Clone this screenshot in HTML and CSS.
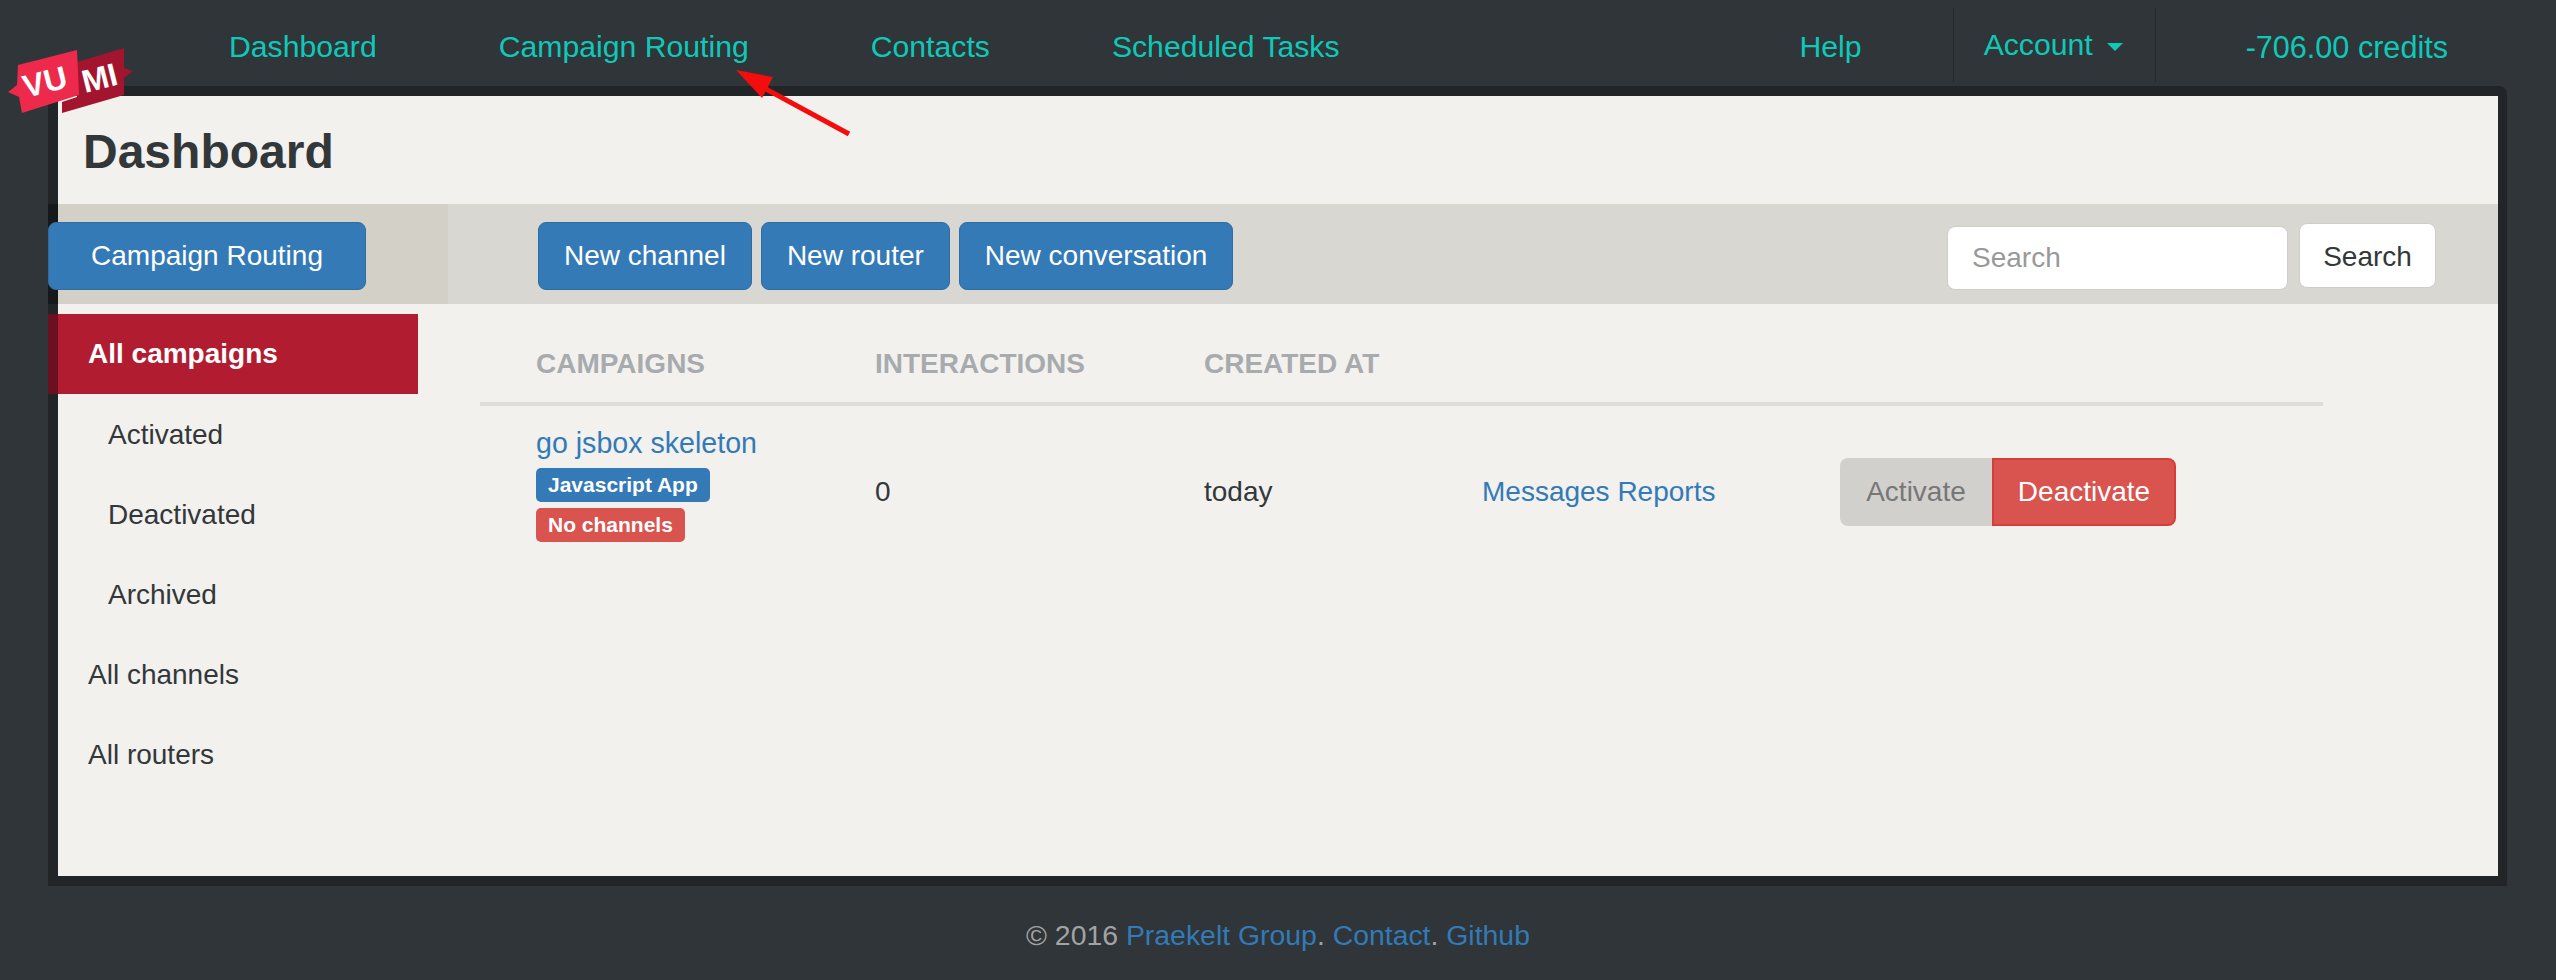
FILE: index.html

```html
<!DOCTYPE html>
<html>
<head>
    <title>Dashboard</title>
    <link rel="stylesheet" href="styles.css">
</head>
<body>
    <nav class="topnav">
        <a class="nav-link" href="#">Dashboard</a>
        <a class="nav-link" href="#">Campaign Routing</a>
        <a class="nav-link" href="#">Contacts</a>
        <a class="nav-link" href="#">Scheduled Tasks</a>
        <a class="nav-link nav-help" href="#">Help</a>
        <a class="nav-account" href="#">Account <span class="caret"></span></a>
        <span class="nav-link nav-credits">-706.00 credits</span>
    </nav>

    <div class="panel">
        <h1 class="page-title">Dashboard</h1>

        <div class="band">
            <div class="band-left">
                <a class="btn btn-primary btn-routing" href="#">Campaign Routing</a>
            </div>
            <div class="band-right">
                <a class="btn btn-primary" href="#">New channel</a>
                <a class="btn btn-primary" href="#">New router</a>
                <a class="btn btn-primary" href="#">New conversation</a>
                <form class="search">
                    <input class="search-input" type="text" placeholder="Search">
                    <button class="btn search-btn" type="button">Search</button>
                </form>
            </div>
        </div>

        <div class="content">
            <ul class="sidebar">
                <li class="side-item side-active">All campaigns</li>
                <li class="side-item side-sub">Activated</li>
                <li class="side-item side-sub">Deactivated</li>
                <li class="side-item side-sub">Archived</li>
                <li class="side-item">All channels</li>
                <li class="side-item">All routers</li>
            </ul>

            <table class="campaigns">
                <thead>
                    <tr>
                        <th class="col-name">Campaigns</th>
                        <th class="col-count">Interactions</th>
                        <th class="col-date">Created at</th>
                        <th class="col-report"></th>
                        <th></th>
                    </tr>
                </thead>
                <tbody>
                    <tr>
                        <td class="cell-name">
                            <a class="link name-link" href="#">go jsbox skeleton</a>
                            <span class="label label-blue">Javascript App</span>
                            <span class="label label-red">No channels</span>
                        </td>
                        <td>0</td>
                        <td>today</td>
                        <td><a class="link" href="#">Messages Reports</a></td>
                        <td>
                            <div class="toggle">
                                <a class="toggle-off" href="#">Activate</a>
                                <a class="toggle-on" href="#">Deactivate</a>
                            </div>
                        </td>
                    </tr>
                </tbody>
            </table>
        </div>
    </div>

    <footer class="footer">
        © 2016 <a class="link" href="#">Praekelt Group</a>. <a class="link" href="#">Contact</a>. <a class="link" href="#">Github</a>
    </footer>

    <!-- logo sits over the corner of the panel -->
    <svg class="logo" width="140" height="90" viewBox="0 40 140 90">
        <polygon points="77,62 124,48 124,68 133,71 124,78 124,95 62,113 62,102 77,97" fill="#a3152e"/>
        <polygon points="18,65 77,50 79,95 22,113 19,97 8,92 17,85" fill="#ee2a4c"/>
        <text class="logo-text" font-size="32" transform="translate(26 98) rotate(-14)">VU</text>
        <text class="logo-text" font-size="32" transform="translate(85 93) rotate(-14)">MI</text>
    </svg>

    <!-- annotation arrow -->
    <svg class="arrow" width="130" height="80" viewBox="730 64 130 80">
        <line x1="849" y1="134" x2="762" y2="87" stroke="#f40d0d" stroke-width="5"/>
        <polygon points="736,70 773,77 762,98" fill="#f40d0d"/>
    </svg>
</body>
</html>
```

FILE: styles.css

```css
body {
    font-family: "Liberation Sans", Arial, sans-serif;
    font-size: 28px;
    margin: 0;
    padding: 0;
    height: 980px;
    overflow: hidden;
    background-color: #2f3538;
    color: #32373a;
    position: relative;
}

a {
    text-decoration: none;
}

.link {
    color: #337ab7;
}

/* top bar */
.topnav {
    display: flex;
    align-items: flex-start;
    height: 86px;
    padding-left: 168px;
    font-size: 30.2px;
}

.nav-link {
    color: #0fc9b8;
    line-height: 38px;
    padding: 28px 61px 0;
}

.nav-help {
    margin-left: auto;
    padding-right: 91px;
}

.nav-account {
    color: #0fc9b8;
    line-height: 74px;
    height: 74px;
    margin-top: 8px;
    width: 171px;
    padding: 0 0 0 30px;
    border-left: 1px solid #24282b;
    border-right: 1px solid #24282b;
}

.caret {
    display: inline-block;
    width: 0;
    height: 0;
    margin-left: 6px;
    vertical-align: middle;
    border-top: 8px solid #0fc9b8;
    border-left: 8px solid transparent;
    border-right: 8px solid transparent;
}

.nav-credits {
    font-size: 30.6px;
    padding-left: 90px;
    padding-right: 108px;
}

/* main panel */
.panel {
    width: 2440px;
    height: 780px;
    margin-left: 48px;
    background-color: #f2f1ed;
    border: 10px solid #212528;
    border-right-width: 9px;
    border-radius: 8px 8px 0 0;
}

.page-title {
    margin: 0;
    padding: 4px 0 0 25px;
    font-size: 48px;
    line-height: 104px;
}

.band {
    display: flex;
    height: 100px;
    background-color: #d9d7d2;
}

.band-left {
    width: 390px;
    margin-left: -10px;
    padding-top: 18px;
    border-left: 10px solid #15191b;
    background-color: #d3d0c8;
}

.band-right {
    flex: 1;
    display: flex;
    align-items: flex-start;
    gap: 9px;
    padding: 18px 62px 0 90px;
}

.btn {
    display: inline-block;
    box-sizing: border-box;
    height: 68px;
    line-height: 66px;
    padding: 0 25px;
    font-family: inherit;
    font-size: 28px;
    border: 1px solid transparent;
    border-radius: 8px;
}

.btn-primary {
    color: #fff;
    background-color: #337ab7;
    border-color: #2e6da4;
}

.btn-routing {
    margin-left: -10px;
    width: 318px;
    text-align: center;
}

.search {
    display: flex;
    align-items: flex-start;
    gap: 11px;
    margin-left: auto;
}

.search-input {
    box-sizing: border-box;
    width: 341px;
    height: 64px;
    margin-top: 4px;
    padding: 0 24px;
    font-family: inherit;
    font-size: 28px;
    background-color: #fff;
    border: 1px solid #cfcdc8;
    border-radius: 8px;
}

.search-input::placeholder {
    color: #999;
}

.search-btn {
    width: 137px;
    height: 65px;
    margin-top: 1px;
    padding: 0;
    color: #32373a;
    background-color: #fff;
    border-color: #cfcdc8;
}

.content {
    display: flex;
}

.sidebar {
    width: 422px;
    margin: 10px 0 0;
    padding: 0;
    list-style: none;
}

.side-item {
    box-sizing: border-box;
    height: 80px;
    line-height: 82px;
    padding-left: 30px;
}

.side-sub {
    padding-left: 50px;
}

.side-active {
    width: 370px;
    margin-left: -10px;
    padding-left: 30px;
    line-height: 80px;
    font-weight: bold;
    color: #fff;
    background-color: #b11c30;
    border-left: 10px solid #6b1020;
}

/* campaign table */
.campaigns {
    table-layout: fixed;
    width: 1843px;
    height: 272px;
    border-collapse: collapse;
}

.campaigns th {
    box-sizing: border-box;
    height: 100px;
    padding: 22px 0 0 56px;
    font-size: 28px;
    text-align: left;
    text-transform: uppercase;
    color: #a8abae;
    border-bottom: 4px solid #dddddb;
}

.col-name { width: 339px; }
.col-count { width: 329px; }
.col-date { width: 278px; }
.col-report { width: 358px; }

.campaigns td {
    padding: 0 0 0 56px;
    vertical-align: middle;
}

.campaigns .cell-name {
    padding-top: 17px;
    padding-bottom: 36px;
}

.name-link {
    display: block;
    font-size: 28.6px;
    line-height: 40px;
    margin-bottom: 5px;
    white-space: nowrap;
}

.label {
    display: block;
    width: fit-content;
    height: 34px;
    line-height: 34px;
    margin-bottom: 6px;
    padding: 0 12px;
    font-size: 21px;
    font-weight: bold;
    color: #fff;
    border-radius: 5px;
    white-space: nowrap;
}

.label-blue {
    background-color: #337ab7;
}

.label-red {
    background-color: #d9534f;
    margin-bottom: 0;
}

.toggle {
    display: flex;
    height: 68px;
    line-height: 68px;
    text-align: center;
}

.toggle-off {
    width: 152px;
    color: #777;
    background-color: #d1d0cd;
    border-radius: 8px 0 0 8px;
}

.toggle-on {
    box-sizing: border-box;
    width: 184px;
    line-height: 64px;
    color: #fff;
    background-color: #d9534f;
    border: 2px solid #d43f3a;
    border-radius: 0 8px 8px 0;
}

.footer {
    text-align: center;
    font-size: 28.4px;
    color: #a3a3a3;
    line-height: 38px;
    padding-top: 30px;
}

/* overlays */
.logo {
    position: absolute;
    left: 0;
    top: 40px;
}

.logo-text {
    font-family: "Liberation Sans", Arial, sans-serif;
    font-weight: bold;
    fill: #fff;
}

.arrow {
    position: absolute;
    left: 730px;
    top: 64px;
}
```
